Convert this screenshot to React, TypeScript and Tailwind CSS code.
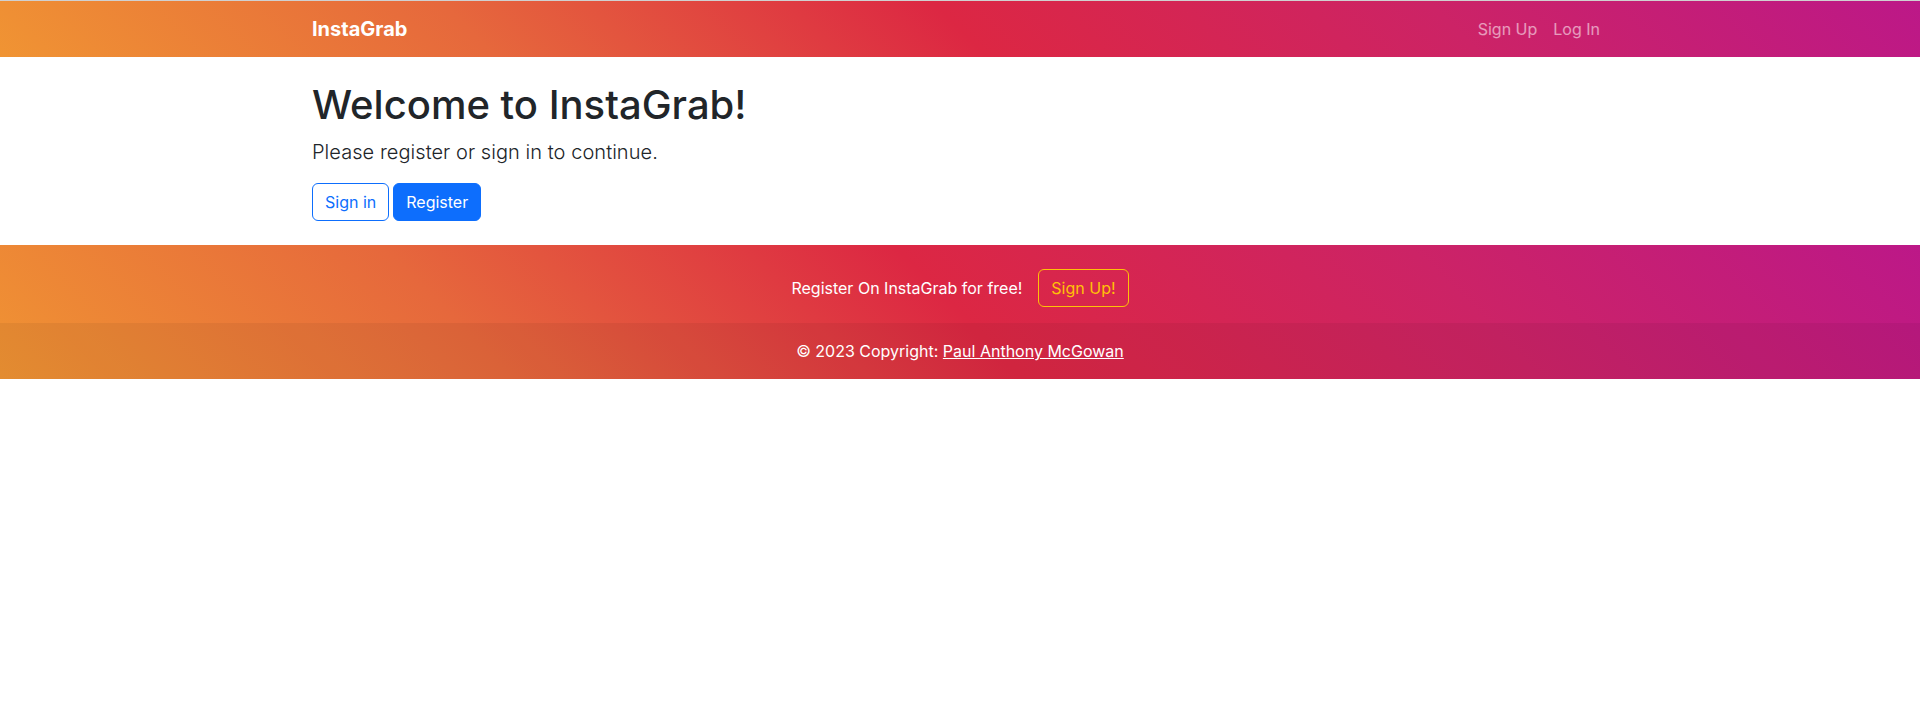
const gradient =
  "bg-[linear-gradient(45deg,#f09433_0%,#e6683c_25%,#dc2743_50%,#cc2366_75%,#bc1888_100%)]";

const Navbar = () => (
  <nav className={`${gradient} border-t border-[#d0d0d0] py-2`}>
    <div className="mx-auto flex max-w-[1320px] items-center justify-between px-3">
      <a href="#" className="py-[5px] text-xl font-bold leading-[30px] text-white">
        InstaGrab
      </a>
      <ul className="flex items-center">
        <li>
          <a href="#" className="block px-2 py-2 text-base leading-6 text-white/55">
            Sign Up
          </a>
        </li>
        <li>
          <a href="#" className="block px-2 py-2 text-base leading-6 text-white/55">
            Log In
          </a>
        </li>
      </ul>
    </div>
  </nav>
);

const Welcome = () => (
  <main className="mx-auto max-w-[1320px] px-3 py-6">
    <h1 className="mb-2 text-[40px] font-medium leading-[48px] text-[#212529]">
      Welcome to InstaGrab!
    </h1>
    <p className="mb-4 text-xl font-light leading-[30px] tracking-[0.05px] text-[#212529]">
      Please register or sign in to continue.
    </p>
    <div className="flex gap-1">
      <a
        href="#"
        className="rounded-md border border-[#0d6efd] px-3 py-[6px] text-base leading-6 text-[#0d6efd]"
      >
        Sign in
      </a>
      <a
        href="#"
        className="rounded-md border border-[#0d6efd] bg-[#0d6efd] px-3 py-[6px] text-base leading-6 text-white"
      >
        Register
      </a>
    </div>
  </main>
);

const Footer = () => (
  <footer className={`${gradient} text-center text-white`}>
    <section className="flex items-center justify-center pt-6 pb-4">
      <span className="mr-4 text-base leading-6">Register On InstaGrab for free!</span>
      <a
        href="#"
        className="rounded-md border border-[#ffc107] px-3 py-[6px] text-base leading-6 text-[#ffc107]"
      >
        Sign Up!
      </a>
    </section>
    <div className="bg-black/5 p-4 text-base leading-6">
      © 2023 Copyright:{" "}
      <a href="#" className="text-white underline">
        Paul Anthony McGowan
      </a>
    </div>
  </footer>
);

export default function App() {
  return (
    <div className="min-h-[718px] bg-white font-['Inter',sans-serif]">
      <Navbar />
      <Welcome />
      <Footer />
    </div>
  );
}
